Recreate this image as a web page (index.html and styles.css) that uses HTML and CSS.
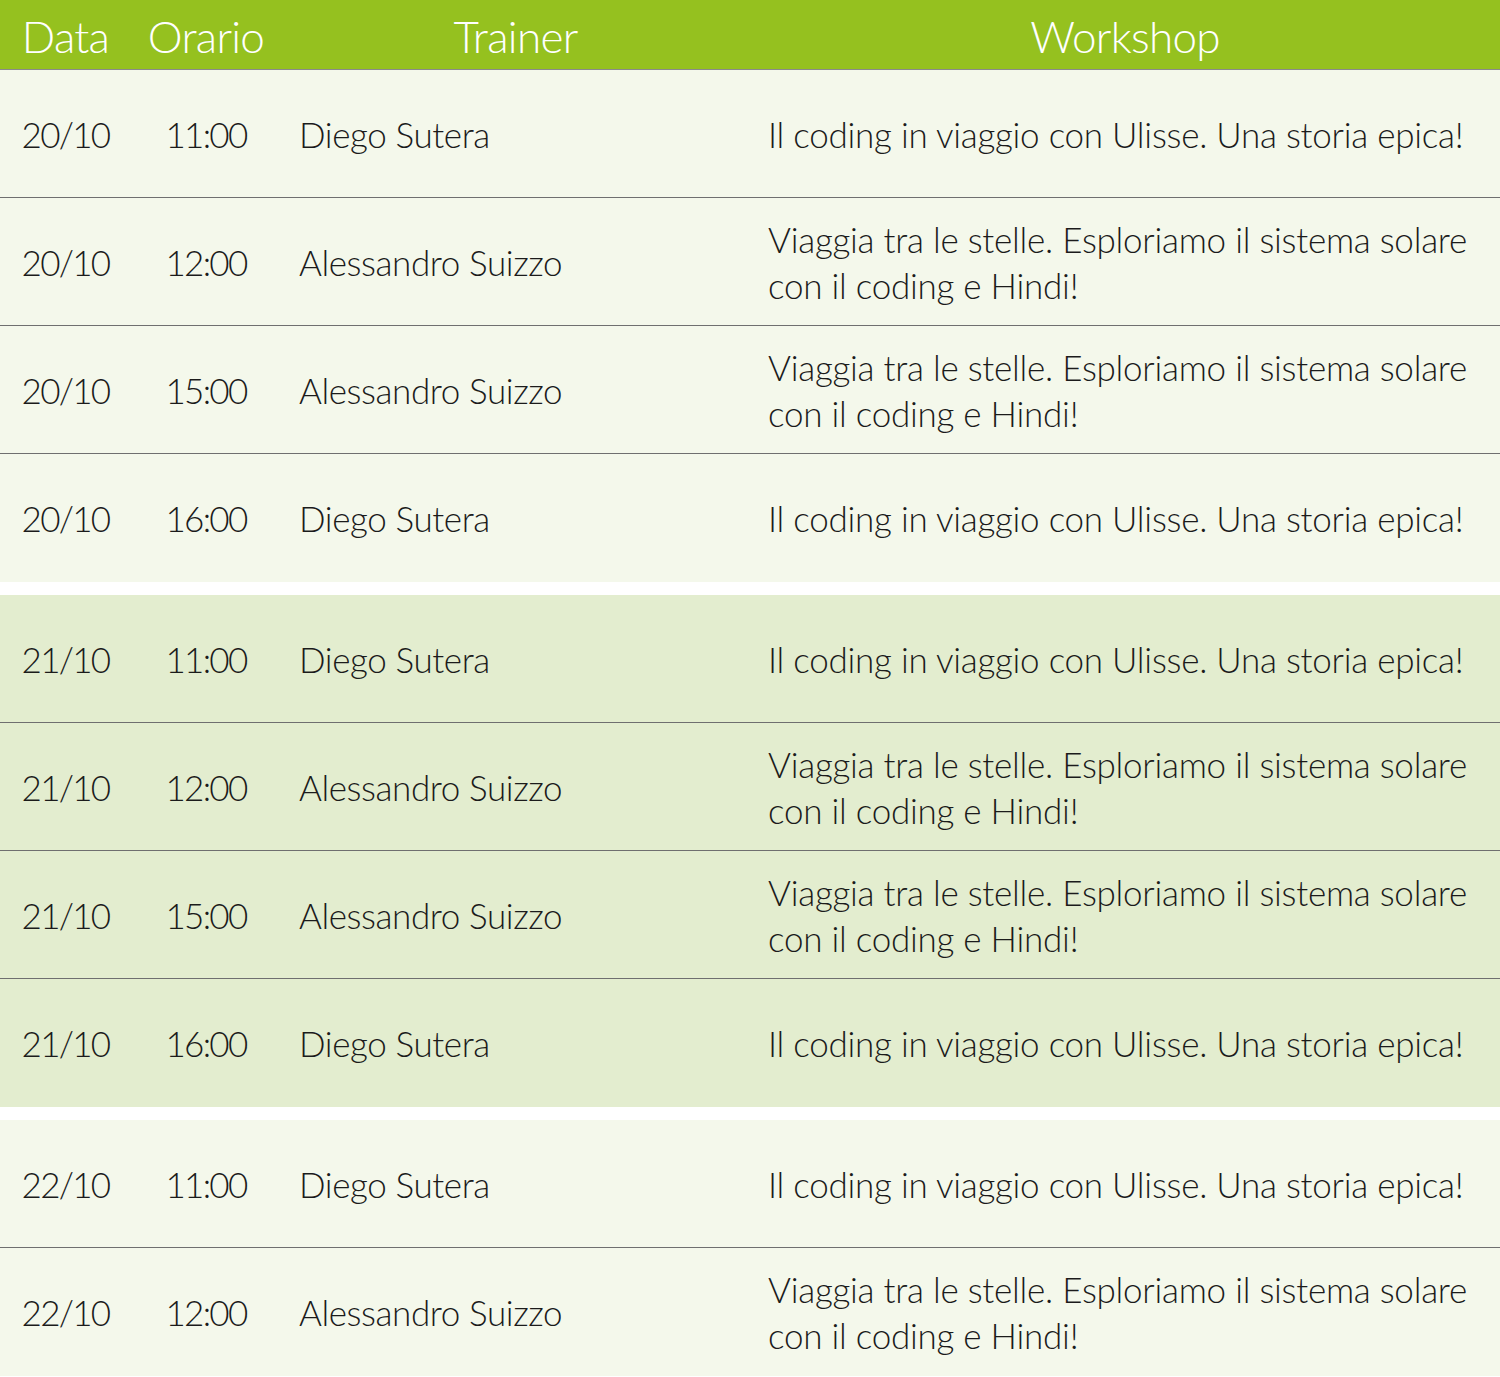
FILE: index.html
```html
<!DOCTYPE html>
<html lang="it">
<head>
<meta charset="utf-8">
<title>Programma workshop</title>
<link rel="stylesheet" href="styles.css">
</head>
<body>
<table class="schedule">
  <colgroup>
    <col class="c-date"><col class="c-time"><col class="c-trainer"><col class="c-work">
  </colgroup>
  <thead>
    <tr class="head">
      <th class="center">Data</th>
      <th class="center">Orario</th>
      <th class="center">Trainer</th>
      <th class="center">Workshop</th>
    </tr>
  </thead>
  <tbody class="day light">
    <tr><td class="center num">20/10</td><td class="center num">11:00</td><td class="left">Diego Sutera</td><td class="left work">Il coding in viaggio con Ulisse. Una storia epica!</td></tr>
    <tr><td class="center num">20/10</td><td class="center num">12:00</td><td class="left">Alessandro Suizzo</td><td class="left work">Viaggia tra le stelle. Esploriamo il sistema solare con il coding e Hindi!</td></tr>
    <tr><td class="center num">20/10</td><td class="center num">15:00</td><td class="left">Alessandro Suizzo</td><td class="left work">Viaggia tra le stelle. Esploriamo il sistema solare con il coding e Hindi!</td></tr>
    <tr><td class="center num">20/10</td><td class="center num">16:00</td><td class="left">Diego Sutera</td><td class="left work">Il coding in viaggio con Ulisse. Una storia epica!</td></tr>
  </tbody>
  <tbody class="spacer"><tr><td colspan="4"></td></tr></tbody>
  <tbody class="day dark">
    <tr><td class="center num">21/10</td><td class="center num">11:00</td><td class="left">Diego Sutera</td><td class="left work">Il coding in viaggio con Ulisse. Una storia epica!</td></tr>
    <tr><td class="center num">21/10</td><td class="center num">12:00</td><td class="left">Alessandro Suizzo</td><td class="left work">Viaggia tra le stelle. Esploriamo il sistema solare con il coding e Hindi!</td></tr>
    <tr><td class="center num">21/10</td><td class="center num">15:00</td><td class="left">Alessandro Suizzo</td><td class="left work">Viaggia tra le stelle. Esploriamo il sistema solare con il coding e Hindi!</td></tr>
    <tr><td class="center num">21/10</td><td class="center num">16:00</td><td class="left">Diego Sutera</td><td class="left work">Il coding in viaggio con Ulisse. Una storia epica!</td></tr>
  </tbody>
  <tbody class="spacer"><tr><td colspan="4"></td></tr></tbody>
  <tbody class="day light">
    <tr><td class="center num">22/10</td><td class="center num">11:00</td><td class="left">Diego Sutera</td><td class="left work">Il coding in viaggio con Ulisse. Una storia epica!</td></tr>
    <tr><td class="center num">22/10</td><td class="center num">12:00</td><td class="left">Alessandro Suizzo</td><td class="left work">Viaggia tra le stelle. Esploriamo il sistema solare con il coding e Hindi!</td></tr>
  </tbody>
</table>
</body>
</html>
```
FILE: styles.css
```css
html, body {
  margin: 0;
  padding: 0;
  background: #ffffff;
}

body {
  font-family: "Lato", "Open Sans", "DejaVu Sans", sans-serif;
  font-weight: 300;
  color: #1b1b1b;
}

.schedule {
  width: 1500px;
  border-collapse: collapse;
  table-layout: fixed;
}

.c-date { width: 131px; }
.c-time { width: 150px; }
.c-trainer { width: 469px; }
.c-work { width: 750px; }

.head th {
  height: 66px;
  padding: 3px 0 0;
  background: #95c11f;
  color: #ffffff;
  font-weight: 300;
  font-size: 44px;
  line-height: 66px;
  border-bottom: 1px solid #8a8a8a;
  letter-spacing: -0.7px;
}

.day td {
  height: 127px;
  padding: 0;
  font-size: 35px;
  line-height: 46px;
  vertical-align: middle;
  border-bottom: 1px solid #6f6f6f;
  letter-spacing: -0.4px;
}

.day tr:last-child td {
  border-bottom: none;
  height: 128px;
}

.day td.num { letter-spacing: -1.7px; }
.day td.work { letter-spacing: -0.25px; }

.light td { background: #f4f8eb; }
.dark td { background: #e3edcf; }

.spacer td {
  height: 13px;
  padding: 0;
  background: #ffffff;
}

.center { text-align: center; }
.left { text-align: left; padding-left: 18px !important; padding-right: 30px !important; }
```
